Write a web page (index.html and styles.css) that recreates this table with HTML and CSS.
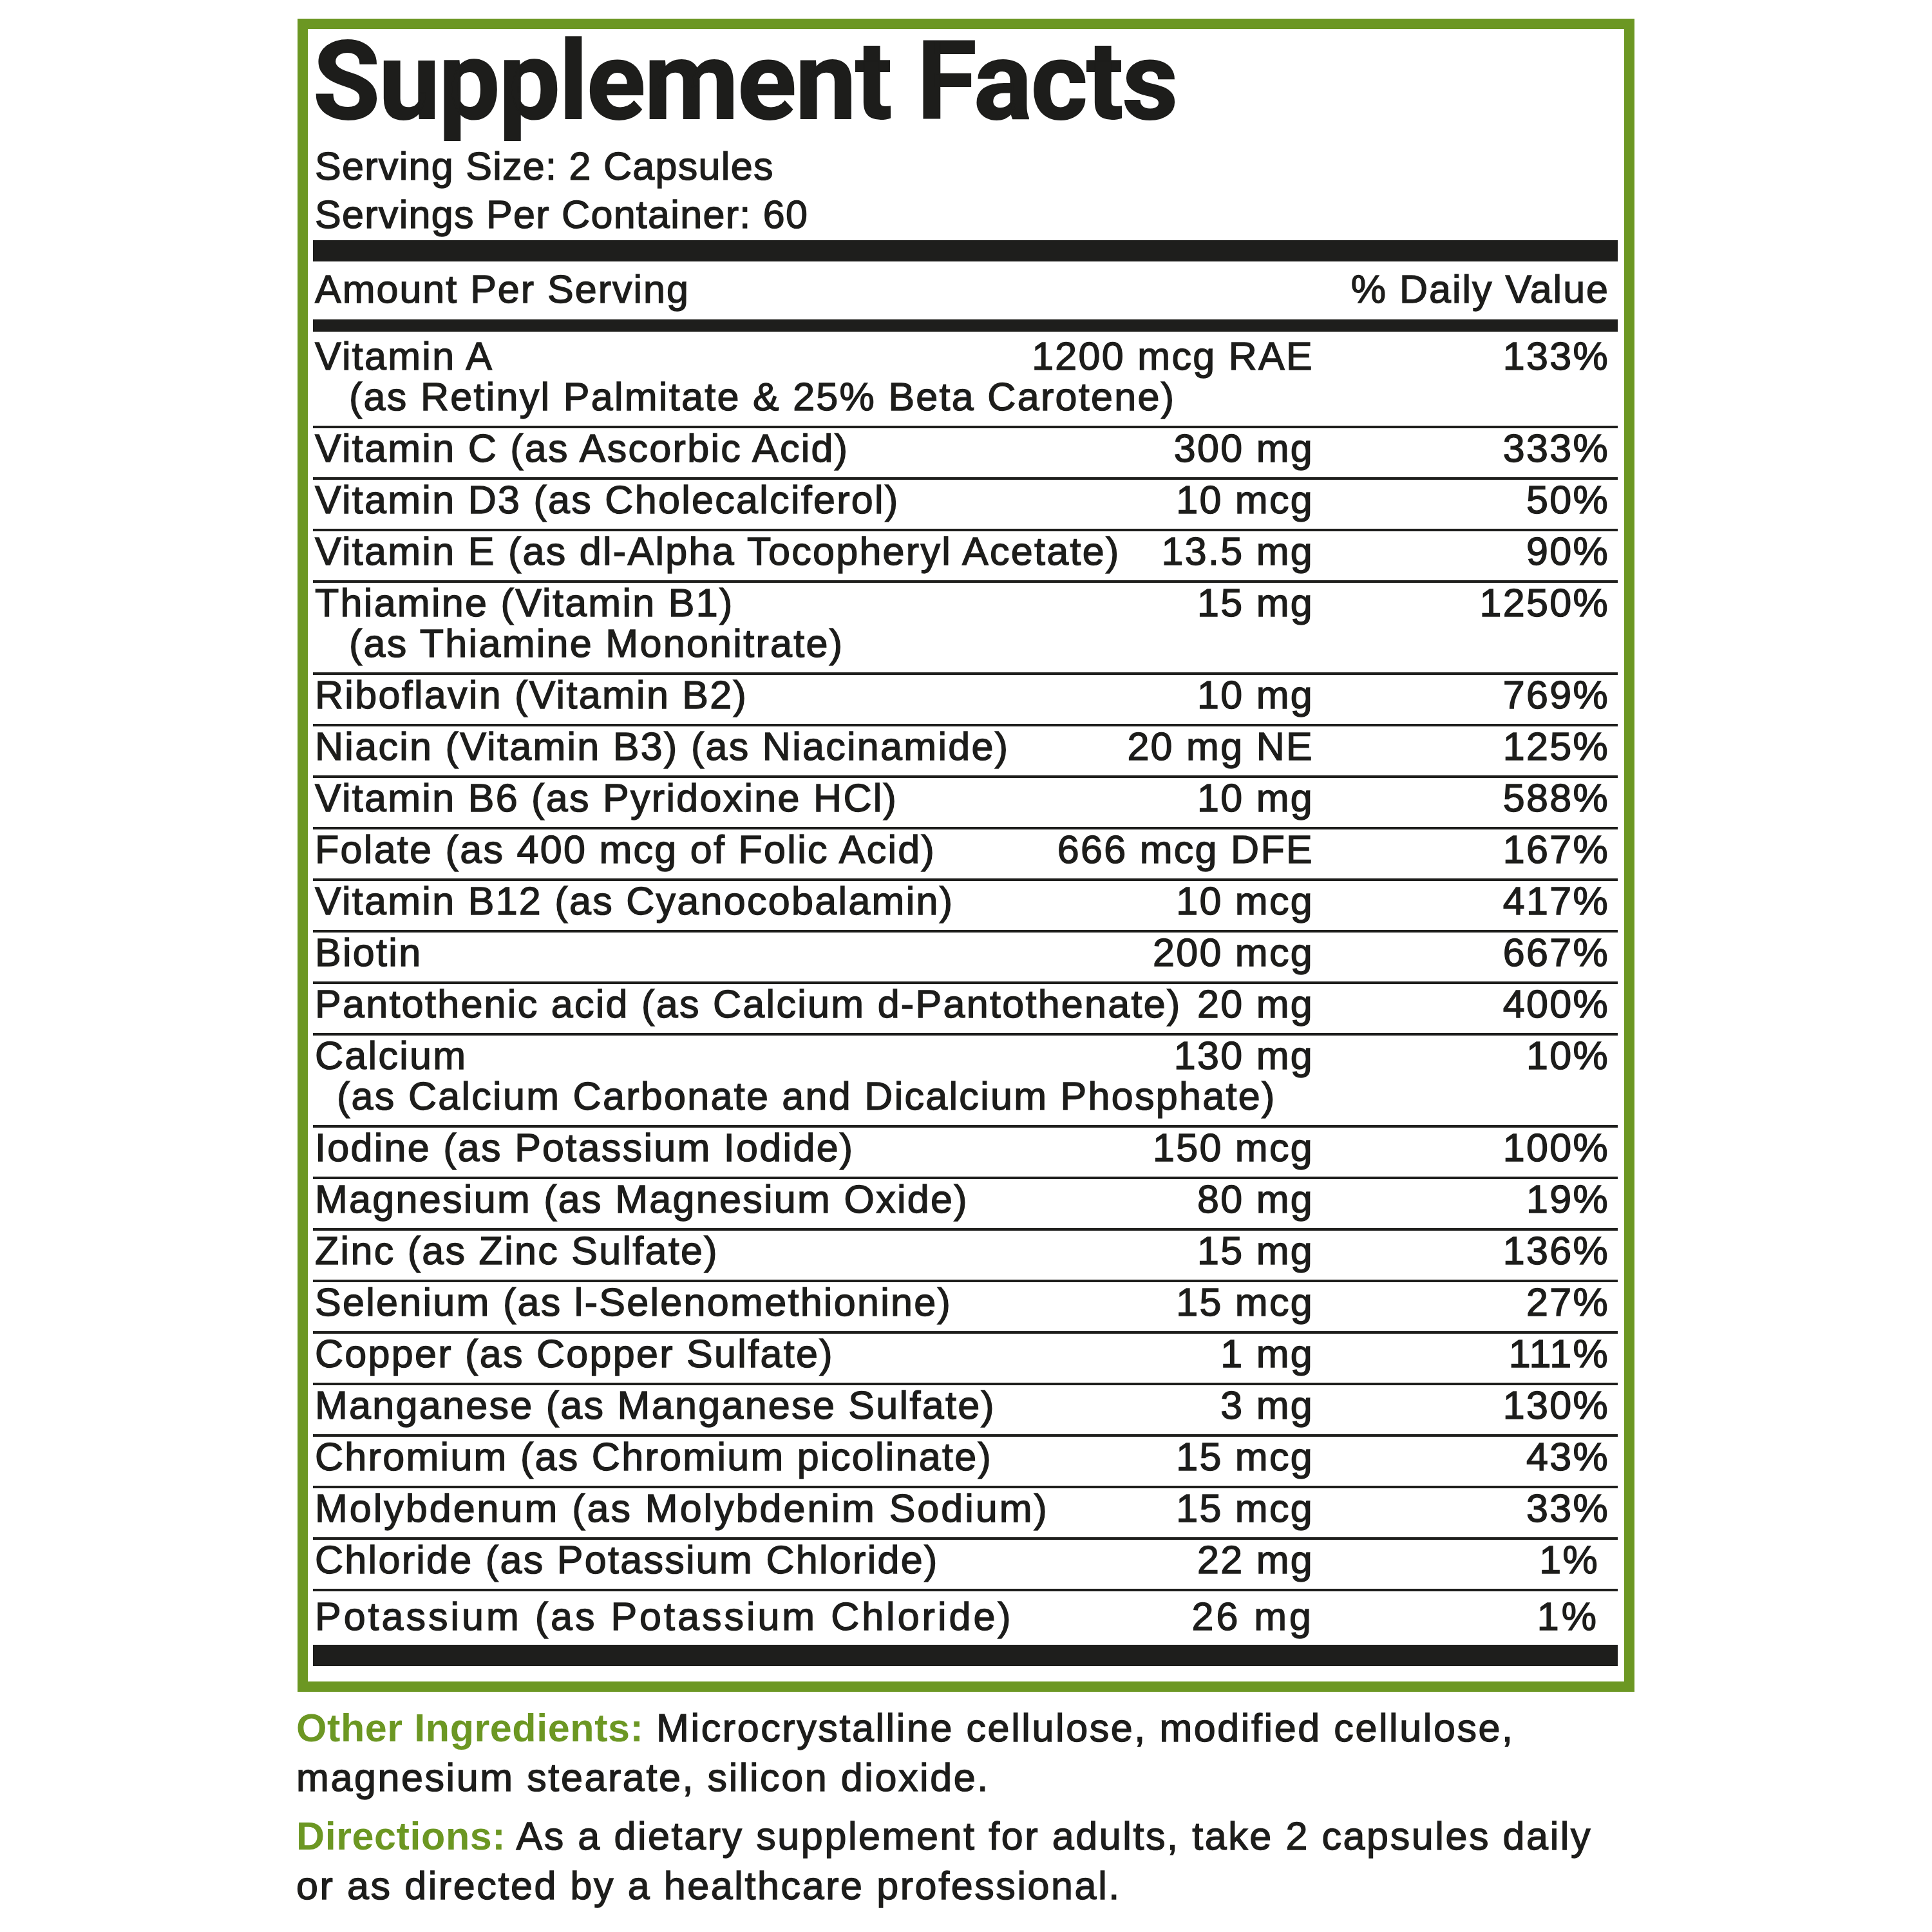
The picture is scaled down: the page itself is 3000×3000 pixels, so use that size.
FILE: index.html
```html
<!DOCTYPE html>
<html>
<head>
<meta charset="utf-8">
<link rel="stylesheet" href="styles.css">
</head>
<body>
<div class="page">
  <div class="frame">
    <h1 class="title">Supplement Facts</h1>
    <div class="serving">
      <div>Serving Size: 2 Capsules</div>
      <div>Servings Per Container: 60</div>
    </div>
    <div class="bar bar-thick"></div>
    <div class="row head">
      <div class="name">Amount Per Serving</div>
      <div class="pct">% Daily Value</div>
    </div>
    <div class="bar bar-mid"></div>
    <div class="rows">
      <div class="row first"><div class="name">Vitamin A<div class="sub sub-wide">(as Retinyl Palmitate &amp; 25% Beta Carotene)</div></div><div class="amt">1200 mcg RAE</div><div class="pct">133%</div></div>
      <div class="row"><div class="name">Vitamin C (as Ascorbic Acid)</div><div class="amt">300 mg</div><div class="pct">333%</div></div>
      <div class="row"><div class="name">Vitamin D3 (as Cholecalciferol)</div><div class="amt">10 mcg</div><div class="pct">50%</div></div>
      <div class="row"><div class="name">Vitamin E (as dl-Alpha Tocopheryl Acetate)</div><div class="amt">13.5 mg</div><div class="pct">90%</div></div>
      <div class="row"><div class="name">Thiamine (Vitamin B1)<div class="sub sub-wide">(as Thiamine Mononitrate)</div></div><div class="amt">15 mg</div><div class="pct">1250%</div></div>
      <div class="row"><div class="name">Riboflavin (Vitamin B2)</div><div class="amt">10 mg</div><div class="pct">769%</div></div>
      <div class="row"><div class="name">Niacin (Vitamin B3) (as Niacinamide)</div><div class="amt">20 mg NE</div><div class="pct">125%</div></div>
      <div class="row"><div class="name">Vitamin B6 (as Pyridoxine HCl)</div><div class="amt">10 mg</div><div class="pct">588%</div></div>
      <div class="row"><div class="name">Folate (as 400 mcg of Folic Acid)</div><div class="amt">666 mcg DFE</div><div class="pct">167%</div></div>
      <div class="row"><div class="name">Vitamin B12 (as Cyanocobalamin)</div><div class="amt">10 mcg</div><div class="pct">417%</div></div>
      <div class="row"><div class="name">Biotin</div><div class="amt">200 mcg</div><div class="pct">667%</div></div>
      <div class="row"><div class="name">Pantothenic acid (as Calcium d-Pantothenate)</div><div class="amt">20 mg</div><div class="pct">400%</div></div>
      <div class="row"><div class="name">Calcium<div class="sub sub-narrow">(as Calcium Carbonate and Dicalcium Phosphate)</div></div><div class="amt">130 mg</div><div class="pct">10%</div></div>
      <div class="row"><div class="name">Iodine (as Potassium Iodide)</div><div class="amt">150 mcg</div><div class="pct">100%</div></div>
      <div class="row"><div class="name">Magnesium (as Magnesium Oxide)</div><div class="amt">80 mg</div><div class="pct">19%</div></div>
      <div class="row"><div class="name">Zinc (as Zinc Sulfate)</div><div class="amt">15 mg</div><div class="pct">136%</div></div>
      <div class="row"><div class="name">Selenium (as l-Selenomethionine)</div><div class="amt">15 mcg</div><div class="pct">27%</div></div>
      <div class="row"><div class="name">Copper (as Copper Sulfate)</div><div class="amt">1 mg</div><div class="pct">111%</div></div>
      <div class="row"><div class="name">Manganese (as Manganese Sulfate)</div><div class="amt">3 mg</div><div class="pct">130%</div></div>
      <div class="row"><div class="name">Chromium (as Chromium picolinate)</div><div class="amt">15 mcg</div><div class="pct">43%</div></div>
      <div class="row"><div class="name name-wide">Molybdenum (as Molybdenim Sodium)</div><div class="amt">15 mcg</div><div class="pct">33%</div></div>
      <div class="row"><div class="name">Chloride (as Potassium Chloride)</div><div class="amt">22 mg</div><div class="pct pct-inset">1%</div></div>
      <div class="row last"><div class="name">Potassium (as Potassium Chloride)</div><div class="amt">26 mg</div><div class="pct pct-inset">1%</div></div>
    </div>
    <div class="bar bar-thick"></div>
  </div>
  <p class="note"><span class="label">Other Ingredients:</span> Microcrystalline cellulose, modified cellulose,<br>magnesium stearate, silicon dioxide.</p>
  <p class="note"><span class="label">Directions:</span> As a dietary supplement for adults, take 2 capsules daily<br>or as directed by a healthcare professional.</p>
</div>
</body>
</html>
```
FILE: styles.css
```css
html, body {
  margin: 0;
  padding: 0;
  background: #ffffff;
}

body {
  font-family: "Liberation Sans", Arial, sans-serif;
  color: #1d1d1b;
}

.page {
  padding: 29px 0 0 462px;
  width: 2076px;
}

.frame {
  border: 16px solid #6c9723;
  padding: 0 10px 24px 8px;
}

.title {
  margin: 6px 0 0 0;
  font-family: Roboto, "Open Sans", sans-serif;
  font-weight: 700;
  font-size: 169px;
  line-height: 150px;
  letter-spacing: -1.7px;
  color: #1d1d1b;
  -webkit-text-stroke: 2px #1d1d1b;
}

.serving {
  margin-top: 20px;
  padding-left: 3px;
  font-size: 61px;
  line-height: 75px;
  letter-spacing: 1.3px;
  -webkit-text-stroke: 1.4px #1d1d1b;
}

.bar {
  background: #1e1e1c;
}

.bar-thick {
  height: 33px;
  margin-top: 2px;
}

.bar-mid {
  height: 19px;
}

.row {
  display: flex;
  align-items: flex-start;
  font-size: 61px;
  line-height: 63px;
  letter-spacing: 2.3px;
  padding-bottom: 13px;
  border-bottom: 4px solid #1e1e1c;
  -webkit-text-stroke: 1.4px #1d1d1b;
  white-space: nowrap;
}

.row.head {
  padding-top: 12px;
  padding-bottom: 15px;
  border-bottom: none;
  letter-spacing: 2px;
}

.row.first {
  padding-top: 7px;
}

.row.last {
  padding-top: 8px;
  padding-bottom: 12px;
  border-bottom: none;
  letter-spacing: 4px;
}

.rows + .bar-thick {
  margin-top: 0;
}

.name {
  flex: 1;
  min-width: 0;
  padding-left: 3px;
}

.name-wide {
  letter-spacing: 3px;
}

.sub-wide {
  padding-left: 53px;
}

.sub-narrow {
  padding-left: 34px;
}

.amt {
  text-align: right;
}

.pct {
  width: 459px;
  padding-right: 13px;
  text-align: right;
  flex: none;
}

.pct-inset {
  width: 443px;
  padding-right: 29px;
}

.note {
  margin: 18px 0 0 -2px;
  font-size: 61px;
  line-height: 77px;
  letter-spacing: 2.6px;
  -webkit-text-stroke: 1.4px #1d1d1b;
  white-space: nowrap;
}

.note + .note {
  margin-top: 14px;
}

.label {
  font-weight: 700;
  letter-spacing: 0.6px;
  color: #6c9723;
  -webkit-text-stroke: 0;
}
```
